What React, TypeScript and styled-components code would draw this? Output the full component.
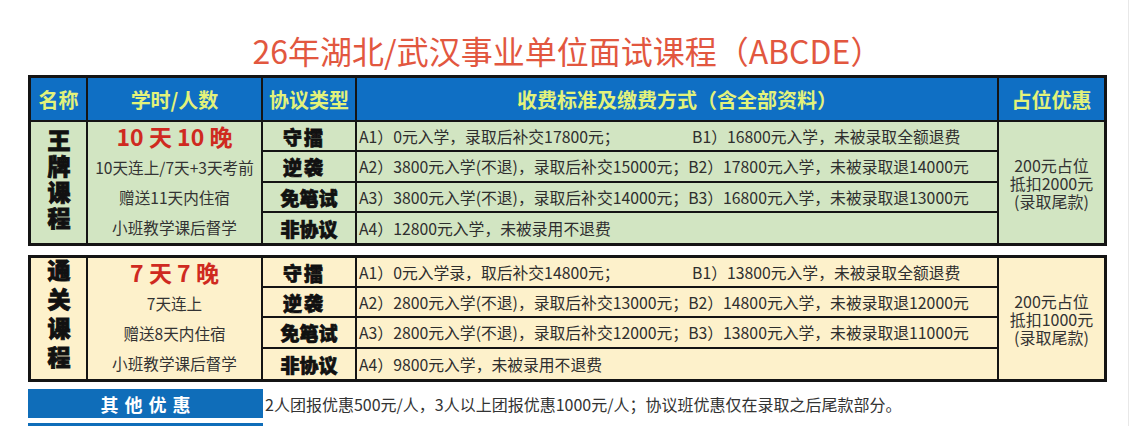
import React from "react";
import styled, { createGlobalStyle } from "styled-components";

const GlobalStyle = createGlobalStyle`
  html, body {
    margin: 0;
    padding: 0;
    overflow: hidden;
    background: #ffffff;
  }
  body {
    font-family: "Noto Sans CJK SC", "Noto Sans", sans-serif;
    color: #333;
  }
`;

const COLS = "55px 173px 92px 640px 105px";
const LINE = "#141414";

const Page = styled.div`
  width: 1129px;
  height: 426px;
  box-sizing: border-box;
  padding-left: 28px;
  border-right: 1px solid #e8e8e8;
`;

const Title = styled.h1`
  width: 1079px;
  height: 75px;
  box-sizing: border-box;
  margin: 0;
  padding-top: 28px;
  text-align: center;
  font-size: 32px;
  line-height: 44px;
  font-weight: 400;
  color: #e2573f;
  white-space: nowrap;
`;

const Table = styled.div`
  width: 1079px;
`;

const HeaderGrid = styled.div`
  display: grid;
  grid-template-columns: ${COLS};
  column-gap: 2px;
  background: ${LINE};
  padding: 3px 3px 0 3px;
`;

const HeaderCell = styled.div`
  height: 42px;
  background: #0f6fc4;
  color: #e3f27a;
  font-size: 20px;
  font-weight: 700;
  display: flex;
  align-items: center;
  justify-content: center;
  white-space: nowrap;
`;

type Tone = "green" | "beige";
const toneBg = (t: Tone) => (t === "green" ? "#d2e5c2" : "#fdf1cb");

const Block = styled.div<{ $rows: string; $top: number; $gapTop: number }>`
  display: grid;
  grid-template-columns: ${COLS};
  grid-template-rows: ${(p) => p.$rows};
  gap: 2px;
  background: ${LINE};
  padding: ${(p) => p.$top}px 3px 3px 3px;
  margin-top: ${(p) => p.$gapTop}px;
`;

const Cell = styled.div<{ $tone: Tone }>`
  background: ${(p) => toneBg(p.$tone)};
  min-width: 0;
`;

const NameCell = styled(Cell)`
  grid-column: 1;
  grid-row: 1 / 5;
  display: flex;
  align-items: center;
  justify-content: center;
  padding-bottom: 3px;
`;

const NameText = styled.span<{ $spacing: number }>`
  writing-mode: vertical-rl;
  text-orientation: upright;
  font-size: 23px;
  font-weight: 900;
  line-height: 1;
  letter-spacing: ${(p) => p.$spacing}px;
  color: #111;
  -webkit-text-stroke: 0.9px #111;
`;

const HoursCell = styled(Cell)`
  grid-column: 2;
  grid-row: 1 / 5;
  display: flex;
  flex-direction: column;
  align-items: center;
`;

const Highlight = styled.div`
  height: 28px;
  line-height: 28px;
  font-size: 23px;
  font-weight: 700;
  color: #cf2a1f;
  white-space: pre;
  margin-bottom: 2px;
`;

const HoursLine = styled.div`
  height: 30px;
  line-height: 30px;
  font-size: 15.6px;
  color: #333;
  white-space: nowrap;
`;

const TypeCell = styled(Cell)<{ $row: number; $shift: number }>`
  grid-column: 3;
  grid-row: ${(p) => p.$row};
  display: flex;
  align-items: center;
  justify-content: center;
  padding-right: ${(p) => p.$shift}px;
  font-size: 19px;
  font-weight: 900;
  color: #111;
  -webkit-text-stroke: 0.7px #111;
  letter-spacing: ${(p) => (p.$shift ? 2 : 0)}px;
  white-space: nowrap;
`;

const FeeCell = styled(Cell)<{ $row: number }>`
  grid-column: 4;
  grid-row: ${(p) => p.$row};
  display: flex;
  align-items: center;
  padding-left: 2px;
  font-size: 15.8px;
  color: #2e2e2e;
  white-space: nowrap;
`;

const FeeA = styled.span<{ $w: number }>`
  display: inline-block;
  min-width: ${(p) => p.$w}px;
`;

const PerkCell = styled(Cell)`
  grid-column: 5;
  grid-row: 1 / 5;
  display: flex;
  align-items: center;
  justify-content: center;
`;

const PerkText = styled.p`
  margin: 0;
  font-size: 16px;
  line-height: 18px;
  color: #333;
  text-align: center;
  white-space: pre-line;
`;

const FooterRow = styled.div`
  display: flex;
  align-items: center;
  margin-top: 7px;
`;

const FooterLabel = styled.div`
  width: 235px;
  height: 29px;
  background: #0f6db9;
  color: #ffffff;
  font-size: 18px;
  font-weight: 700;
  letter-spacing: 6px;
  text-indent: 6px;
  display: flex;
  align-items: center;
  justify-content: center;
  flex-shrink: 0;
`;

const FooterText = styled.div`
  padding-left: 2px;
  font-size: 16px;
  color: #333;
  white-space: nowrap;
`;

const FooterBar = styled.div`
  width: 235px;
  height: 20px;
  margin-top: 5px;
  background: #0f6db9;
`;

type Fee = { a: string; b?: string; aw?: number };
type BlockData = {
  tone: Tone;
  name: string;
  nameSpacing: number;
  rows: string;
  top: number;
  gapTop: number;
  hours: string[];
  fees: Fee[];
  perk: string;
};

const TYPES = [
  { t: "守擂", shift: 10 },
  { t: "逆袭", shift: 10 },
  { t: "免笔试", shift: 0 },
  { t: "非协议", shift: 0 },
];

const blocks: BlockData[] = [
  {
    tone: "green",
    name: "王牌课程",
    nameSpacing: 3,
    rows: "28px 29px 28px 30px",
    top: 2,
    gapTop: 0,
    hours: ["10 天 10 晚", "10天连上/7天+3天考前", "赠送11天内住宿", "小班教学课后督学"],
    fees: [
      { a: "A1）0元入学，录取后补交17800元；", b: "B1）16800元入学，未被录取全额退费", aw: 333 },
      { a: "A2）3800元入学(不退)，录取后补交15000元；", b: "B2）17800元入学，未被录取退14000元", aw: 314 },
      { a: "A3）3800元入学(不退)，录取后补交14000元；", b: "B3）16800元入学，未被录取退13000元", aw: 314 },
      { a: "A4）12800元入学，未被录用不退费" },
    ],
    perk: "200元占位\n抵扣2000元\n(录取尾款)",
  },
  {
    tone: "beige",
    name: "通关课程",
    nameSpacing: 6,
    rows: "28px 28px 29px 30px",
    top: 3,
    gapTop: 9,
    hours: ["7 天 7 晚", "7天连上", "赠送8天内住宿", "小班教学课后督学"],
    fees: [
      { a: "A1）0元入学录，取后补交14800元；", b: "B1）13800元入学，未被录取全额退费", aw: 333 },
      { a: "A2）2800元入学(不退)，录取后补交13000元；", b: "B2）14800元入学，未被录取退12000元", aw: 314 },
      { a: "A3）2800元入学(不退)，录取后补交12000元；", b: "B3）13800元入学，未被录取退11000元", aw: 314 },
      { a: "A4）9800元入学，未被录用不退费" },
    ],
    perk: "200元占位\n抵扣1000元\n(录取尾款)",
  },
];

const headers = ["名称", "学时/人数", "协议类型", "收费标准及缴费方式（含全部资料）", "占位优惠"];

function CourseBlock({ d }: { d: BlockData }) {
  return (
    <Block $rows={d.rows} $top={d.top} $gapTop={d.gapTop}>
      <NameCell $tone={d.tone}>
        <NameText $spacing={d.nameSpacing}>{d.name}</NameText>
      </NameCell>
      <HoursCell $tone={d.tone}>
        <Highlight>{d.hours[0]}</Highlight>
        {d.hours.slice(1).map((h) => (
          <HoursLine key={h}>{h}</HoursLine>
        ))}
      </HoursCell>
      {TYPES.map((ty, i) => (
        <TypeCell key={ty.t} $tone={d.tone} $row={i + 1} $shift={ty.shift}>
          {ty.t}
        </TypeCell>
      ))}
      {d.fees.map((f, i) => (
        <FeeCell key={f.a} $tone={d.tone} $row={i + 1}>
          <FeeA $w={f.aw ?? 0}>{f.a}</FeeA>
          {f.b && <span>{f.b}</span>}
        </FeeCell>
      ))}
      <PerkCell $tone={d.tone}>
        <PerkText>{d.perk}</PerkText>
      </PerkCell>
    </Block>
  );
}

export default function App() {
  return (
    <>
      <GlobalStyle />
      <Page>
        <Title>26年湖北/武汉事业单位面试课程（ABCDE）</Title>
        <Table>
          <HeaderGrid>
            {headers.map((h) => (
              <HeaderCell key={h}>{h}</HeaderCell>
            ))}
          </HeaderGrid>
          {blocks.map((b) => (
            <CourseBlock key={b.tone} d={b} />
          ))}
        </Table>
        <FooterRow>
          <FooterLabel>其他优惠</FooterLabel>
          <FooterText>
            2人团报优惠500元/人，3人以上团报优惠1000元/人；协议班优惠仅在录取之后尾款部分。
          </FooterText>
        </FooterRow>
        <FooterBar />
      </Page>
    </>
  );
}
